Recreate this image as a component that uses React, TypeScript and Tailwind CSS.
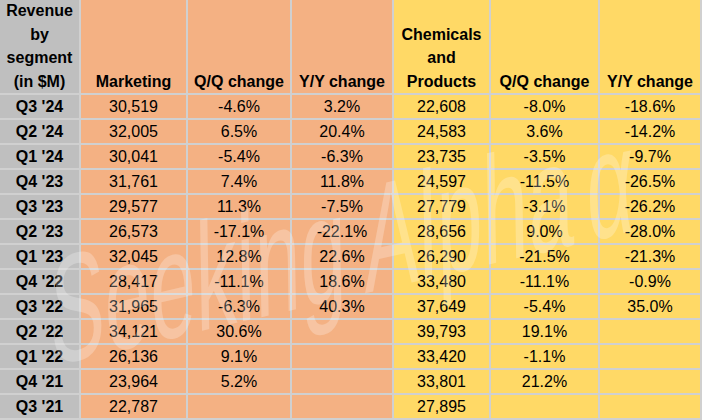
import * as React from 'react';

type Row = [string, string, string, string, string, string, string];

const ROWS: Row[] = [
  ["Q3 '24", '30,519', '-4.6%', '3.2%', '22,608', '-8.0%', '-18.6%'],
  ["Q2 '24", '32,005', '6.5%', '20.4%', '24,583', '3.6%', '-14.2%'],
  ["Q1 '24", '30,041', '-5.4%', '-6.3%', '23,735', '-3.5%', '-9.7%'],
  ["Q4 '23", '31,761', '7.4%', '11.8%', '24,597', '-11.5%', '-26.5%'],
  ["Q3 '23", '29,577', '11.3%', '-7.5%', '27,779', '-3.1%', '-26.2%'],
  ["Q2 '23", '26,573', '-17.1%', '-22.1%', '28,656', '9.0%', '-28.0%'],
  ["Q1 '23", '32,045', '12.8%', '22.6%', '26,290', '-21.5%', '-21.3%'],
  ["Q4 '22", '28,417', '-11.1%', '18.6%', '33,480', '-11.1%', '-0.9%'],
  ["Q3 '22", '31,965', '-6.3%', '40.3%', '37,649', '-5.4%', '35.0%'],
  ["Q2 '22", '34,121', '30.6%', '', '39,793', '19.1%', ''],
  ["Q1 '22", '26,136', '9.1%', '', '33,420', '-1.1%', ''],
  ["Q4 '21", '23,964', '5.2%', '', '33,801', '21.2%', ''],
  ["Q3 '21", '22,787', '', '', '27,895', '', ''],
];

// column fills: label, 3x marketing, 3x chemicals
const FILLS = [
  'bg-[#bfbfbf] font-bold',
  'bg-[#f4b183]',
  'bg-[#f4b183]',
  'bg-[#f4b183]',
  'bg-[#ffd966]',
  'bg-[#ffd966]',
  'bg-[#ffd966]',
];

const HEADERS: string[][] = [
  ['Revenue', 'by', 'segment', '(in $M)'],
  ['Marketing'],
  ['Q/Q change'],
  ['Y/Y change'],
  ['Chemicals', 'and', 'Products'],
  ['Q/Q change'],
  ['Y/Y change'],
];

export default function App() {
  return (
    <div
      className="relative w-[702px] h-[420px] overflow-hidden bg-white text-black"
      style={{ fontFamily: '"Liberation Sans", Arial, sans-serif' }}
    >
      {/* ── Table ─────────────────────────────────────── */}
      <div className="grid grid-cols-[79px_105px_102px_100px_95px_107px_100px] grid-rows-[93px_repeat(13,23px)] gap-[2px] pr-[2px] pb-[2px] bg-[#d0d0d0] text-[16px]">
        {HEADERS.map((lines, i) => (
          <div
            key={'h' + i}
            className={`${FILLS[i]} flex flex-col justify-end items-center font-bold leading-[23.5px] text-center whitespace-nowrap`}
          >
            {lines.map(l => (
              <span key={l}>{l}</span>
            ))}
          </div>
        ))}
        {ROWS.map(row =>
          row.map((cell, i) => (
            <div
              key={row[0] + i}
              className={`${FILLS[i]} flex items-center justify-center leading-none whitespace-nowrap`}
            >
              {cell}
            </div>
          ))
        )}
      </div>

      {/* Watermark */}
      <div className="pointer-events-none absolute left-[50px] top-[262px] h-[100px] whitespace-nowrap text-[100px] leading-[100px] text-white/25 origin-left [transform:rotate(-13deg)_skewX(-12deg)_scale(0.84,1.5)]">
        Seeking Alpha<span className="ml-4">α</span>
      </div>
    </div>
  );
}
